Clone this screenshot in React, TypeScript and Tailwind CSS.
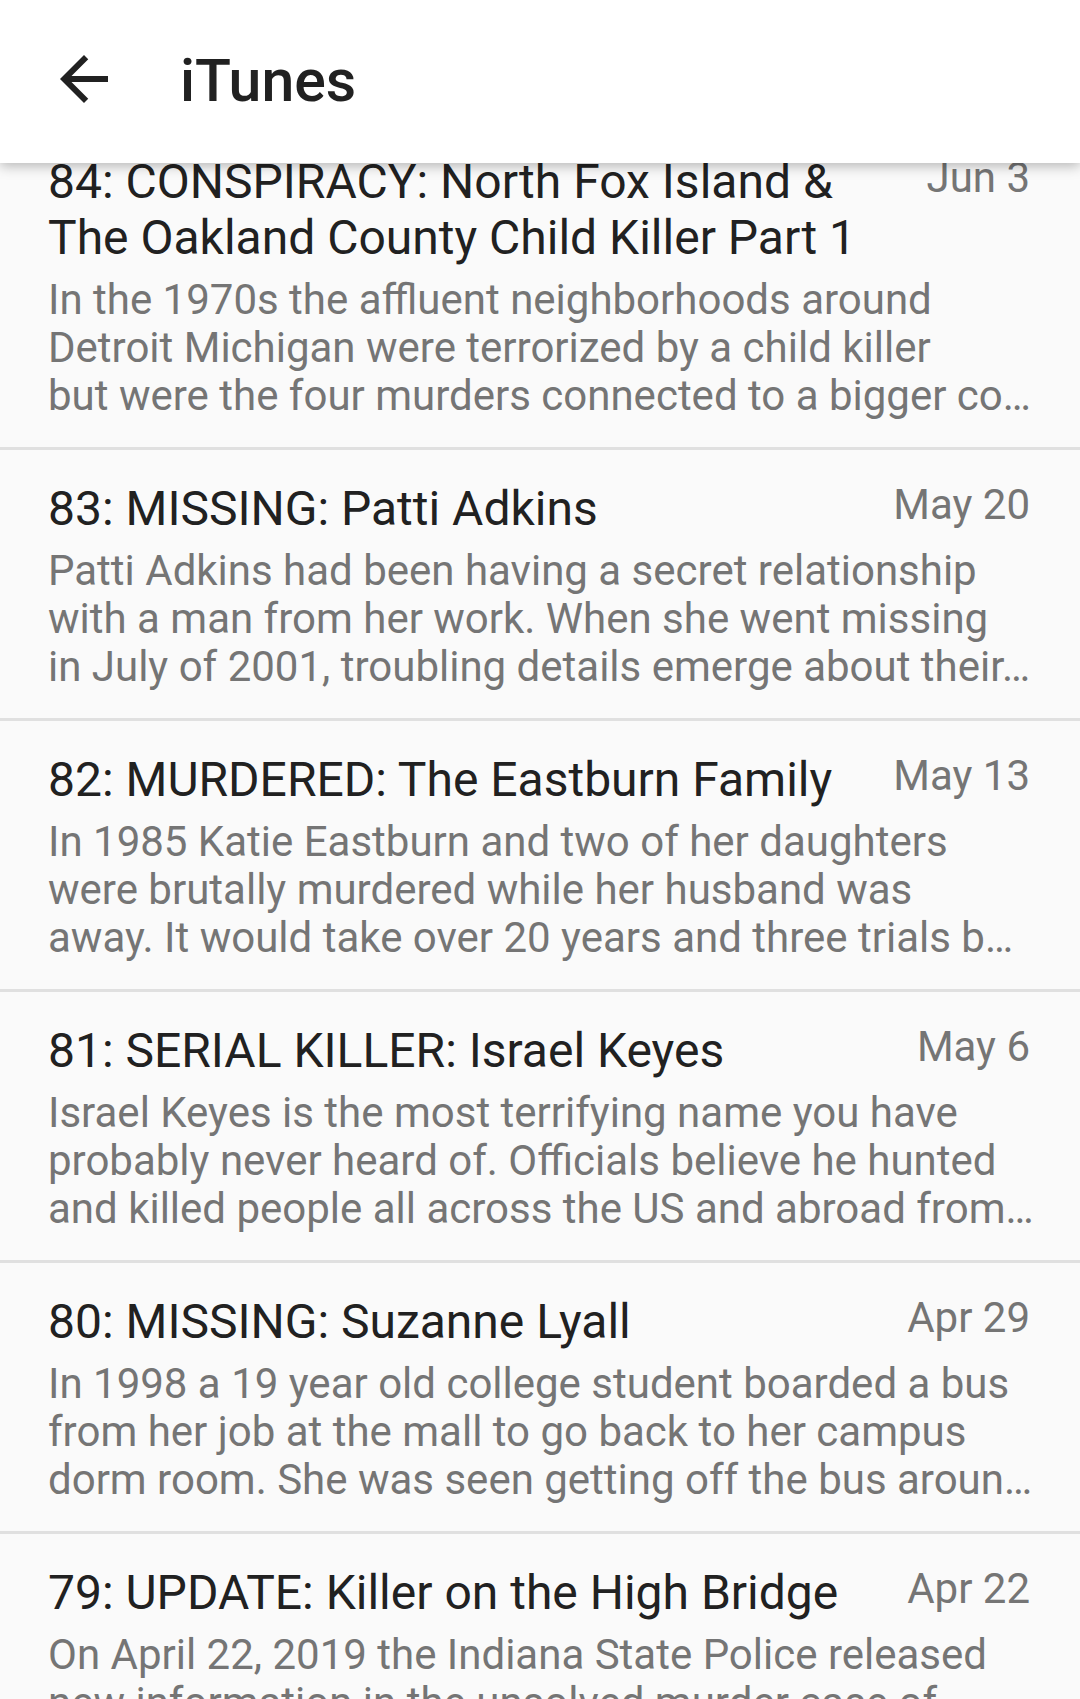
import React from 'react'

// descriptions are kept as the three lines the app shows, already ellipsized
const episodes = [
  {
    title: '84: CONSPIRACY: North Fox Island & The Oakland County Child Killer Part 1',
    date: 'Jun 3',
    desc: [
      'In the 1970s the affluent neighborhoods around',
      'Detroit Michigan were terrorized by a child killer',
      'but were the four murders connected to a bigger co…',
    ],
  },
  {
    title: '83: MISSING: Patti Adkins',
    date: 'May 20',
    desc: [
      'Patti Adkins had been having a secret relationship',
      'with a man from her work. When she went missing',
      'in July of 2001, troubling details emerge about their…',
    ],
  },
  {
    title: '82: MURDERED: The Eastburn Family',
    date: 'May 13',
    desc: [
      'In 1985 Katie Eastburn and two of her daughters',
      'were brutally murdered while her husband was',
      'away. It would take over 20 years and three trials b…',
    ],
  },
  {
    title: '81: SERIAL KILLER: Israel Keyes',
    date: 'May 6',
    desc: [
      'Israel Keyes is the most terrifying name you have',
      'probably never heard of. Officials believe he hunted',
      'and killed people all across the US and abroad from…',
    ],
  },
  {
    title: '80: MISSING: Suzanne Lyall',
    date: 'Apr 29',
    desc: [
      'In 1998 a 19 year old college student boarded a bus',
      'from her job at the mall to go back to her campus',
      'dorm room. She was seen getting off the bus aroun…',
    ],
  },
  {
    title: '79: UPDATE: Killer on the High Bridge',
    date: 'Apr 22',
    desc: [
      'On April 22, 2019 the Indiana State Police released',
      'new information in the unsolved murder case of',
      'Abby Williams and Libby German in Delphi, Indi…',
    ],
  },
]

const App = () => {
  return (
    <div
      className="h-[1699px] w-[1080px] overflow-hidden bg-[#fafafa]"
      style={{ fontFamily: 'Roboto, "Noto Sans", sans-serif' }}
    >
      {/* toolbar */}
      <div className="relative z-10 flex h-[163px] items-center bg-white px-[48px] shadow-[0_3px_12px_rgba(0,0,0,0.28)]">
        <svg viewBox="0 0 24 24" className="mb-[6px] h-[72px] w-[72px] shrink-0 fill-[#212121]">
          <path d="M20 11H7.83l5.59-5.59L12 4l-8 8 8 8 1.41-1.41L7.83 13H20v-2z" />
        </svg>
        <h1 className="ml-[60px] text-[59px] font-medium text-[#212121]">iTunes</h1>
      </div>

      {/* episode list, scrolled a bit under the toolbar */}
      <div className="mt-[-40px]">
        {episodes.map((ep, i) => (
          <div key={i} className="border-b-[3px] border-[#e0e0e0] pt-[31px] pb-[27px] pl-[48px] pr-[40px]">
            <div className="flex items-start">
              <div className="flex-1 text-[48px] leading-[56px] text-[#212121]">{ep.title}</div>
              <div className="ml-[40px] mr-[10px] shrink-0 text-[42px] leading-[48px] text-[#757575]">{ep.date}</div>
            </div>
            <p className="mt-[10px] whitespace-pre-line text-[42px] leading-[48px] text-[#757575]">
              {ep.desc.join('\n')}
            </p>
          </div>
        ))}
      </div>
    </div>
  )
}

export default App
